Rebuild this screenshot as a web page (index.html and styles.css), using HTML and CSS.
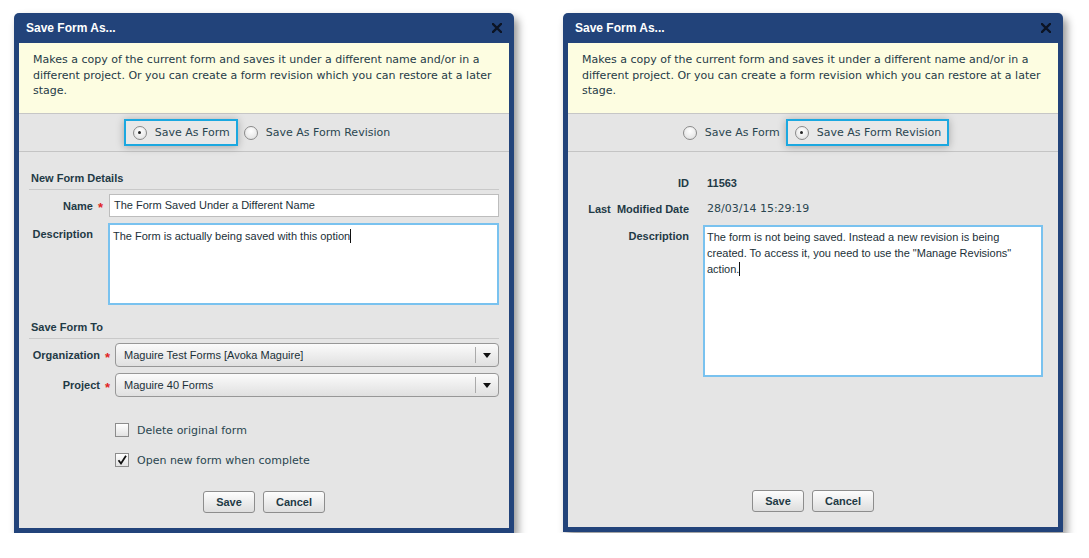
FILE: index.html
```html
<!DOCTYPE html>
<html lang="en">
<head>
    <meta charset="UTF-8">
    <title>Save Form As</title>
    <link rel="stylesheet" href="styles.css">
</head>
<body>

<div class="dialog">
    <div class="dlg-head">
        <span class="dlg-title">Save Form As...</span>
        <svg class="dlg-close" width="10" height="10" viewBox="0 0 10 10"><path d="M1 1 L9 9 M9 1 L1 9" stroke="#0c1424" stroke-width="2.4" stroke-linecap="square"/></svg>
    </div>
    <div class="dlg-inner">
        <div class="intro">Makes a copy of the current form and saves it under a different name and/or in a different project. Or you can create a form revision which you can restore at a later stage.</div>
        <div class="mode mode-left">
            <label class="opt on"><span class="radio checked"></span>Save As Form</label>
            <label class="opt"><span class="radio"></span>Save As Form Revision</label>
        </div>
        <div class="form">
            <div class="sect-title">New Form Details</div>
            <div class="grid grid-details">
                <div class="lbl">Name</div>
                <div class="req">*</div>
                <div class="input">The Form Saved Under a Different Name</div>
                <div class="lbl lbl-top">Description</div>
                <div></div>
                <div class="textarea short">The Form is actually being saved with this option<span class="caret"></span></div>
            </div>

            <div class="sect-title sect-gap">Save Form To</div>
            <div class="grid grid-target">
                <div class="lbl">Organization</div>
                <div class="req">*</div>
                <div class="select"><span class="select-text">Maguire Test Forms [Avoka Maguire]</span><span class="select-btn"><span class="arrow"></span></span></div>
                <div class="lbl">Project</div>
                <div class="req">*</div>
                <div class="select"><span class="select-text">Maguire 40 Forms</span><span class="select-btn"><span class="arrow"></span></span></div>
            </div>

            <div class="checks">
                <label class="check"><span class="box"></span>Delete original form</label>
                <label class="check"><span class="box"><svg width="12" height="12" viewBox="0 0 12 12"><path d="M2.5 6.2 L5 9.5 L10 1.8" fill="none" stroke="#111" stroke-width="1.8"/></svg></span>Open new form when complete</label>
            </div>
        </div>
        <div class="buttons">
            <button class="btn btn-save">Save</button>
            <button class="btn btn-cancel">Cancel</button>
        </div>
    </div>
</div>

<div class="dialog dialog-rev">
    <div class="dlg-head">
        <span class="dlg-title">Save Form As...</span>
        <svg class="dlg-close" width="10" height="10" viewBox="0 0 10 10"><path d="M1 1 L9 9 M9 1 L1 9" stroke="#0c1424" stroke-width="2.4" stroke-linecap="square"/></svg>
    </div>
    <div class="dlg-inner">
        <div class="intro">Makes a copy of the current form and saves it under a different name and/or in a different project. Or you can create a form revision which you can restore at a later stage.</div>
        <div class="mode">
            <label class="opt"><span class="radio"></span>Save As Form</label>
            <label class="opt on"><span class="radio checked"></span>Save As Form Revision</label>
        </div>
        <div class="form form-rev">
            <div class="rev-grid">
                <div class="lbl">ID</div>
                <div class="val val-bold">11563</div>
                <div class="lbl">Last&nbsp; Modified Date</div>
                <div class="val">28/03/14 15:29:19</div>
                <div class="lbl lbl-desc">Description</div>
                <div class="textarea tall">The form is not being saved. Instead a new revision is being created. To access it, you need to use the "Manage Revisions" action.<span class="caret"></span></div>
            </div>
        </div>
        <div class="buttons">
            <button class="btn btn-save">Save</button>
            <button class="btn btn-cancel">Cancel</button>
        </div>
    </div>
</div>

</body>
</html>
```

FILE: styles.css
```css
body { margin: 0; padding: 13px 0 0 14px; display: flex; align-items: flex-start; gap: 49px; background: #fff; font-family: "Liberation Sans", Arial, sans-serif; font-size: 11px; color: #1f3a45; }

.dialog { width: 500px; height: 520px; box-sizing: border-box; background: #22437a; padding: 0 5px 5px; border-radius: 5px 5px 0 0; display: flex; flex-direction: column; box-shadow: 4px 5px 8px rgba(0, 0, 0, 0.42); }
.dialog-rev { height: 519px; }
.dlg-head { height: 30px; flex: none; display: flex; align-items: center; justify-content: space-between; padding: 0 7px; }
.dlg-title { color: #fff; font-weight: bold; font-size: 12px; }
.dlg-close { display: block; }
.dlg-inner { flex: 1; background: #e5e5e5; display: flex; flex-direction: column; }

.intro { background: #fdfde1; border-bottom: 1px solid #c6c6c6; padding: 9px 14px 14px; font-family: "DejaVu Sans", Verdana, sans-serif; font-size: 11px; line-height: 15.5px; height: 47px; color: #1f3b47; }

.mode { height: 37px; border-bottom: 1px solid #c4c4c4; display: flex; justify-content: center; align-items: center; font-family: "DejaVu Sans", Verdana, sans-serif; font-size: 11px; color: #2a4550; }
.mode-left { padding-right: 8px; }
.opt { display: flex; align-items: center; gap: 8px; height: 23px; padding: 0 4px; border: 2px solid transparent; }
.opt.on { border-color: #1ba8e0; padding: 0 6px 0 7px; box-shadow: 0 1px 8px rgba(0, 0, 0, 0.28); background: #e8e8e8; }
.radio { width: 12px; height: 12px; border-radius: 50%; border: 1px solid #8a8a8a; background: radial-gradient(circle at 50% 35%, #fff, #dcdcdc); display: flex; align-items: center; justify-content: center; }
.radio.checked::after { content: ""; width: 3px; height: 3px; border-radius: 50%; background: #222; }

.form { padding: 18px 10px 0; }
.sect-title { font-weight: bold; line-height: 16px; padding: 0 2px 3px; border-bottom: 1px solid #c9c9c9; margin-bottom: 4px; }
.sect-gap { margin-top: 14px; }

.grid { display: grid; row-gap: 6px; align-items: center; }
.grid-details { grid-template-columns: 64px 15px 1fr; }
.grid-target { grid-template-columns: 71px 15px 1fr; }
.lbl { font-weight: bold; text-align: right; }
.lbl-top { align-self: start; padding-top: 5px; }
.req { color: #e02424; text-align: center; font-size: 13px; font-weight: bold; line-height: 11px; padding-top: 4px; }

.input { height: 21px; line-height: 21px; background: #fff; border: 1px solid #bdbdbd; padding: 0 4px; margin-left: 1px; color: #1b3038; }
.textarea { background: #fff; border: 2px solid #79c2ef; padding: 3px 3px; line-height: 16px; color: #1b3038; box-sizing: border-box; }
.textarea.short { height: 82px; }
.textarea.tall { height: 152px; padding: 2px 20px 2px 2px; }
.caret { display: inline-block; width: 1px; height: 14px; background: #111; vertical-align: -3px; }

.select { height: 22px; border: 1px solid #979797; border-radius: 4px; background: linear-gradient(#fbfbfb, #e0e0e0); display: flex; align-items: center; }
.select-text { flex: 1; padding-left: 8px; color: #1b3038; }
.select-btn { width: 22px; height: 16px; border-left: 1px solid #aaa; display: flex; align-items: center; justify-content: center; }
.arrow { width: 0; height: 0; border-left: 4px solid transparent; border-right: 4px solid transparent; border-top: 5px solid #111; }

.checks { margin-top: 18px; padding-left: 86px; font-family: "DejaVu Sans", Verdana, sans-serif; color: #2a4550; }
.check { display: flex; align-items: center; gap: 8px; height: 30px; }
.box { width: 12px; height: 12px; border: 1px solid #8c8c8c; background: linear-gradient(#fff, #e2e2e2); display: flex; align-items: center; justify-content: center; }

.buttons { margin-top: auto; padding-bottom: 15px; display: flex; justify-content: center; gap: 8px; }
.btn { height: 22px; border: 1px solid #8d8d8d; border-radius: 3px; background: linear-gradient(#fdfdfd, #dedede); font-family: "Liberation Sans", Arial, sans-serif; font-size: 11px; font-weight: bold; color: #1f3a45; padding: 0; }
.btn-save { width: 52px; }
.btn-cancel { width: 62px; }

.form-rev { padding: 18px 15px 0; }
.rev-grid { display: grid; grid-template-columns: 106px 1fr; column-gap: 14px; }
.rev-grid .lbl { line-height: 26px; }
.rev-grid .lbl-desc { line-height: 16px; margin-top: 3px; padding-top: 3px; }
.val { line-height: 26px; padding-left: 4px; font-family: "DejaVu Sans", Verdana, sans-serif; color: #2a4550; }
.val-bold { font-family: "Liberation Sans", Arial, sans-serif; font-weight: bold; color: #1f3a45; }
.rev-grid .textarea { margin-top: 3px; }
```
